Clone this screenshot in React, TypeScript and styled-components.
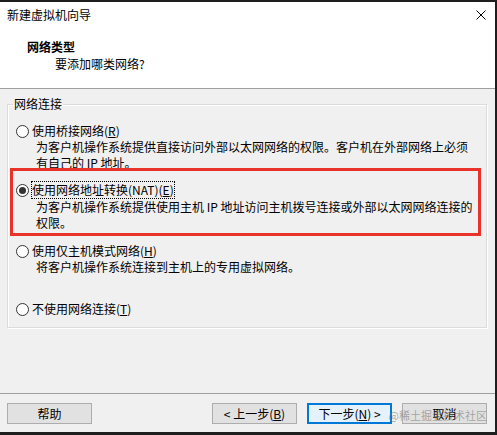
import React from 'react';
import styled, {createGlobalStyle} from "styled-components";

const GlobalStyle = createGlobalStyle`
    html, body {
        margin: 0;
        padding: 0;
        background: #f0f0f0;
    }
    body {
        font-family: "Noto Sans CJK SC", "Microsoft YaHei", sans-serif;
        font-size: 12px;
        line-height: 16px;
        color: #000;
    }
`

type OptionData = {
    label: React.ReactNode
    desc?: React.ReactNode
    checked?: boolean
    focused?: boolean
    gap: number
}

const options: OptionData[] = [
    {
        label: <>使用桥接网络(<u>R</u>)</>,
        desc: <>为客户机操作系统提供直接访问外部以太网网络的权限。客户机在外部网络上必须<br/>有自己的 IP 地址。</>,
        gap: 0,
    },
    {
        label: <>使用网络地址转换(NAT)(<u>E</u>)</>,
        desc: <>为客户机操作系统提供使用主机 IP 地址访问主机拨号连接或外部以太网网络连接的<br/>权限。</>,
        checked: true,
        focused: true,
        gap: 0,
    },
    {
        label: <>使用仅主机模式网络(<u>H</u>)</>,
        desc: <>将客户机操作系统连接到主机上的专用虚拟网络。</>,
        gap: 10,
    },
    {
        label: <>不使用网络连接(<u>T</u>)</>,
        gap: 26,
    },
]

export default function App() {
    return (
        <>
            <GlobalStyle/>
            <Window>
                <Header>
                    <TitleRow>
                        <span>新建虚拟机向导</span>
                        <svg width="10" height="10" viewBox="0 0 10 10">
                            <path d="M0.5 0.5 L9.5 9.5 M9.5 0.5 L0.5 9.5" stroke="#000" strokeWidth="1" fill="none"/>
                        </svg>
                    </TitleRow>
                    <PageTitle>网络类型</PageTitle>
                    <PageSub>要添加哪类网络?</PageSub>
                </Header>

                <Body>
                    <GroupBox>
                        <Legend>网络连接</Legend>
                        {options.map((o, i) => (
                            <Option key={i} $gap={o.gap} $highlight={o.checked}>
                                <LabelRow>
                                    <Radio $checked={o.checked}/>
                                    <LabelText $focused={o.focused}>{o.label}</LabelText>
                                </LabelRow>
                                {o.desc && <Desc>{o.desc}</Desc>}
                            </Option>
                        ))}
                    </GroupBox>
                </Body>

                <Footer>
                    <Button>帮助</Button>
                    <Spacer/>
                    <Button>&lt; 上一步(<u>B</u>)</Button>
                    <Button $primary>下一步(<u>N</u>) &gt;</Button>
                    <Button>取消</Button>
                    <Watermark>@稀土掘金技术社区</Watermark>
                </Footer>
            </Window>
        </>
    );
}

const Window = styled.div`
    width: 497px;
    height: 435px;
    box-sizing: border-box;
    border-top: 2px solid #1e1e1e;
    border-right: 2px solid #1e1e1e;
    border-bottom: 3px solid #1e1e1e;
    display: flex;
    flex-direction: column;
    background: #f0f0f0;
`
const Header = styled.header`
    height: 87px;
    box-sizing: border-box;
    background: #fff;
    border-bottom: 1px solid #a0a0a0;
    display: flex;
    flex-direction: column;
`
const TitleRow = styled.div`
    height: 26px;
    display: flex;
    align-items: center;
    justify-content: space-between;
    padding: 0 9px 0 7px;
`
const PageTitle = styled.div`
    margin: 11px 0 0 27px;
    font-weight: bold;
`
const PageSub = styled.div`
    margin: 1px 0 0 55px;
`
const Body = styled.main`
    flex: 1;
    padding: 0 8px 0 7px;
    display: flex;
    flex-direction: column;
`
const GroupBox = styled.fieldset`
    margin: 7px 0 0;
    padding: 11px 8px 10px 5px;
    min-width: 0;
    border: 1px solid #dcdcdc;
    box-shadow: inset 1px 1px 0 #fff, 1px 1px 0 #fff;
`
const Legend = styled.legend`
    padding: 0 1px;
    line-height: 16px;
`
const Option = styled.div<{ $gap: number; $highlight?: boolean }>`
    margin-top: ${p => p.$gap}px;
    padding: ${p => p.$highlight ? '10px 0 2px 3px' : '0 0 0 3px'};
    outline: ${p => p.$highlight ? '3px solid #e8322a' : 'none'};
`
const LabelRow = styled.div`
    display: flex;
    align-items: center;
    gap: 3px;
`
const Radio = styled.span<{ $checked?: boolean }>`
    width: 13px;
    height: 13px;
    box-sizing: border-box;
    border-radius: 50%;
    border: 1px solid #333;
    background: #fff;
    flex-shrink: 0;
    display: grid;
    place-items: center;

    &::after {
        content: '';
        width: 7px;
        height: 7px;
        border-radius: 50%;
        background: ${p => p.$checked ? '#333' : 'transparent'};
    }
`
const LabelText = styled.span<{ $focused?: boolean }>`
    white-space: nowrap;
    border: 1px dotted ${p => p.$focused ? '#000' : 'transparent'};
    margin-left: -1px;
    ${p => !p.$focused && 'border: none; margin-left: 0;'}
`
const Desc = styled.div`
    padding-left: 20px;
    white-space: nowrap;
`
const Footer = styled.footer`
    position: relative;
    border-top: 1px solid #a0a0a0;
    padding: 9px 8px 8px 7px;
    display: flex;
    gap: 10px;
`
const Spacer = styled.div`
    flex: 1;
`
const Button = styled.button<{ $primary?: boolean }>`
    width: 85px;
    height: 21px;
    box-sizing: border-box;
    padding: 0;
    font: inherit;
    font-size: 12px;
    line-height: 19px;
    color: #000;
    border: 1px solid ${p => p.$primary ? '#0078d7' : '#adadad'};
    background: ${p => p.$primary ? '#e5f1fb' : '#e1e1e1'};
    box-shadow: ${p => p.$primary ? 'inset 0 0 0 1px #0078d7' : 'none'};
`
const Watermark = styled.span`
    position: absolute;
    right: 8px;
    top: 13px;
    font-size: 11px;
    line-height: 16px;
    color: rgba(120, 120, 120, 0.6);
    pointer-events: none;
`
